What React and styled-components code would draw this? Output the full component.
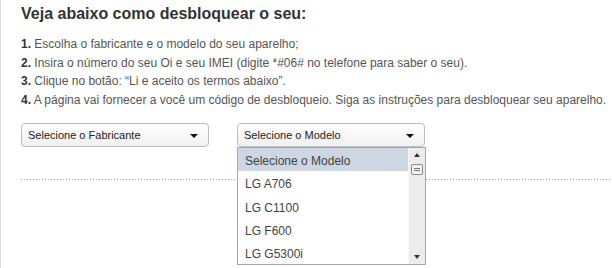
import React from "react";
import styled, { createGlobalStyle } from "styled-components";

const Global = createGlobalStyle`
  html, body { margin: 0; padding: 0; background: #fff; }
  body { font-family: "Liberation Sans", Arial, sans-serif; }
`;

const Page = styled.div`
  box-sizing: border-box;
  width: 612px;
  height: 268px;
  overflow: hidden;
  border-left: 1px solid #dcdcdc;
  padding: 4px 0 0 20px;
  color: #555;
`;

const Title = styled.h2`
  margin: 0;
  font-size: 16px;
  line-height: 20px;
  font-weight: bold;
  color: #333;
`;

const Steps = styled.ol`
  margin: 11px 0 0;
  padding: 0;
  list-style: none;
`;

const Step = styled.li`
  font-size: 12px;
  line-height: 18.5px;
  color: #555;
  white-space: nowrap;
`;

const Num = styled.b`
  color: #333;
`;

const SelectRow = styled.div`
  display: flex;
  gap: 28px;
  margin-top: 14px;
`;

const SelectWrap = styled.div`
  position: relative;
`;

const SelectBox = styled.div`
  box-sizing: border-box;
  width: 188px;
  height: 24px;
  border: 1px solid #bdbdbd;
  border-radius: 4px;
  background: linear-gradient(#ffffff, #f0f0f0);
  display: flex;
  align-items: center;
  justify-content: space-between;
  padding: 0 10px 0 6px;
  font-size: 11px;
  color: #222;
`;

const Caret = styled.span`
  width: 0;
  height: 0;
  border-left: 4px solid transparent;
  border-right: 4px solid transparent;
  border-top: 4px solid #111;
  margin-top: 2px;
`;

const Dropdown = styled.div`
  position: absolute;
  top: 24px;
  left: 0;
  z-index: 2;
  box-sizing: border-box;
  width: 189px;
  height: 118px;
  border: 1px solid #a8a8a8;
  background: #fff;
  display: flex;
`;

const Options = styled.ul`
  flex: 1;
  margin: 0;
  padding: 0;
  list-style: none;
`;

const Option = styled.li`
  box-sizing: border-box;
  height: 23.3px;
  padding: 3px 0 0 7px;
  line-height: 20.3px;
  font-size: 12px;
  color: #444;
  background: ${(p) => (p.$active ? "#cdd6e2" : "transparent")};
`;

const Scrollbar = styled.div`
  width: 16px;
  background: #ececec;
  border-left: 1px solid #f8f8f8;
  display: flex;
  flex-direction: column;
  align-items: center;
`;

const ArrowUp = styled.span`
  margin-top: 5px;
  width: 0;
  height: 0;
  border-left: 3.5px solid transparent;
  border-right: 3.5px solid transparent;
  border-bottom: 4px solid #333;
`;

const ArrowDown = styled.span`
  margin-top: auto;
  margin-bottom: 5px;
  width: 0;
  height: 0;
  border-left: 3.5px solid transparent;
  border-right: 3.5px solid transparent;
  border-top: 4px solid #333;
`;

const Thumb = styled.span`
  margin-top: 7px;
  box-sizing: border-box;
  width: 12px;
  height: 11px;
  border: 1px solid #8a8a8a;
  border-radius: 2px;
  background: linear-gradient(
    #f4f4f4 0 2px,
    #777 2px 3px,
    #f4f4f4 3px 4px,
    #777 4px 5px,
    #f4f4f4 5px 6px
  );
  background-size: 6px 8px;
  background-repeat: no-repeat;
  background-position: center;
  background-color: #f4f4f4;
`;

const Divider = styled.div`
  margin-top: 32px;
  height: 1px;
  background-image: linear-gradient(to right, #999 0 1px, transparent 1px);
  background-size: 3px 1px;
`;

const steps = [
  ["1.", "Escolha o fabricante e o modelo do seu aparelho;"],
  ["2.", "Insira o número do seu Oi e seu IMEI (digite *#06# no telefone para saber o seu)."],
  ["3.", "Clique no botão: “Li e aceito os termos abaixo”."],
  ["4.", "A página vai fornecer a você um código de desbloqueio. Siga as instruções para desbloquear seu aparelho."],
];

const models = ["Selecione o Modelo", "LG A706", "LG C1100", "LG F600", "LG G5300i"];

export default function App() {
  return (
    <>
      <Global />
      <Page>
        <Title>Veja abaixo como desbloquear o seu:</Title>
        <Steps>
          {steps.map(([n, t]) => (
            <Step key={n}>
              <Num>{n}</Num> {t}
            </Step>
          ))}
        </Steps>
        <SelectRow>
          <SelectWrap>
            <SelectBox>
              Selecione o Fabricante
              <Caret />
            </SelectBox>
          </SelectWrap>
          <SelectWrap>
            <SelectBox>
              Selecione o Modelo
              <Caret />
            </SelectBox>
            <Dropdown>
              <Options>
                {models.map((m, i) => (
                  <Option key={m} $active={i === 0}>
                    {m}
                  </Option>
                ))}
              </Options>
              <Scrollbar>
                <ArrowUp />
                <Thumb />
                <ArrowDown />
              </Scrollbar>
            </Dropdown>
          </SelectWrap>
        </SelectRow>
        <Divider />
      </Page>
    </>
  );
}
